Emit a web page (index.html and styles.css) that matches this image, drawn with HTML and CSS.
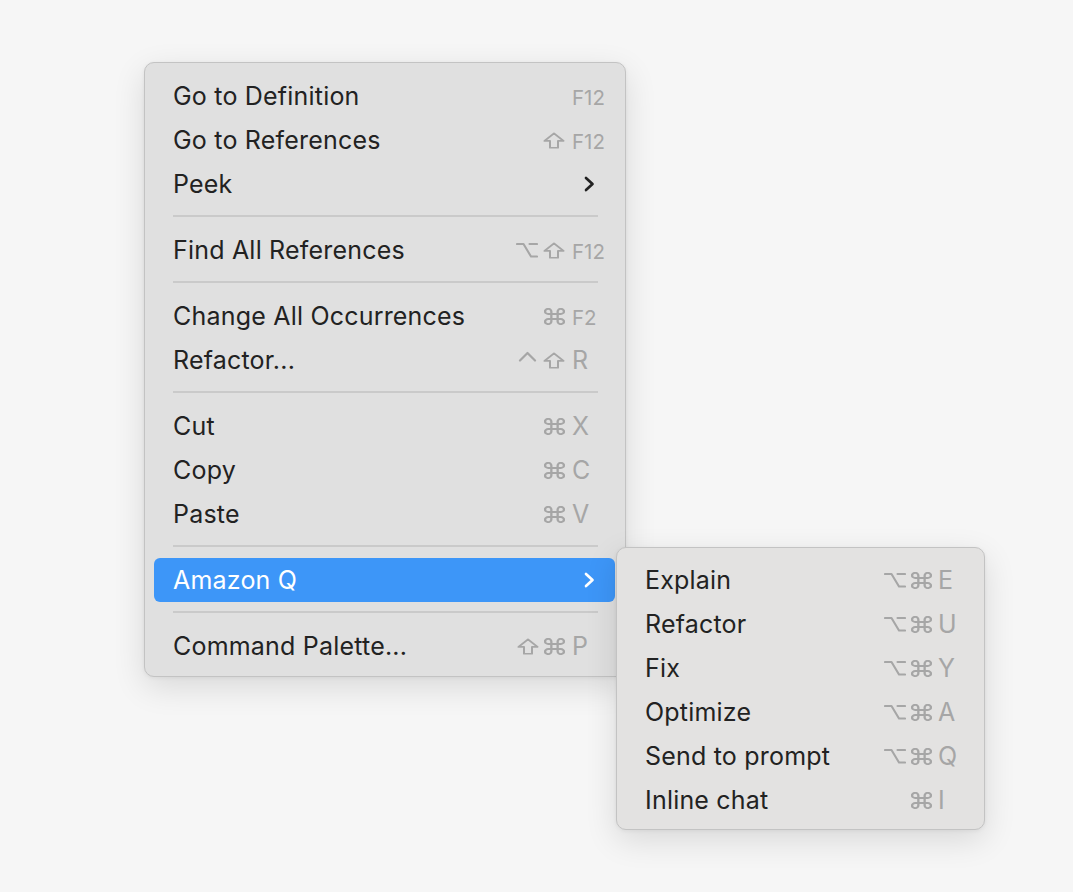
FILE: index.html
```html
<!DOCTYPE html>
<html lang="en">
<head>
<meta charset="utf-8">
<title>Context menu</title>
<link rel="stylesheet" href="styles.css">
</head>
<body>
<svg class="defs" width="0" height="0" aria-hidden="true">
  <defs>
    <symbol id="i-cmd" viewBox="2 2 20 20" preserveAspectRatio="none"><path d="M15 6v12a3 3 0 1 0 3-3H6a3 3 0 1 0 3 3V6a3 3 0 1 0-3 3h12a3 3 0 1 0-3-3"/></symbol>
    <symbol id="i-shift" viewBox="0 0 22 20" preserveAspectRatio="none"><path d="M11 1.5 L20.5 10.5 H15 V18.5 H7 V10.5 H1.5 Z"/></symbol>
    <symbol id="i-opt" viewBox="0 0 22 16" preserveAspectRatio="none"><path d="M1 2 H7.5 L15 14.5 H21 M13.5 2 H21"/></symbol>
    <symbol id="i-ctrl" viewBox="0 0 20 11"><path d="M2.5 9.5 L10 2 L17.5 9.5"/></symbol>
    <symbol id="i-chev" viewBox="0 0 12 16"><path d="M3 2 L9.5 8 L3 14"/></symbol>
  </defs>
</svg>

<div class="menu main">
  <div class="item"><span class="label">Go to Definition</span><span class="sc"><span class="key fkey">F12</span></span></div>
  <div class="item"><span class="label">Go to References</span><span class="sc"><svg class="ic shift"><use href="#i-shift"/></svg><span class="key fkey">F12</span></span></div>
  <div class="item"><span class="label">Peek</span><svg class="chev"><use href="#i-chev"/></svg></div>
  <div class="sep"></div>
  <div class="item"><span class="label">Find All References</span><span class="sc"><svg class="ic opt"><use href="#i-opt"/></svg><svg class="ic shift"><use href="#i-shift"/></svg><span class="key fkey">F12</span></span></div>
  <div class="sep"></div>
  <div class="item"><span class="label">Change All Occurrences</span><span class="sc"><svg class="ic cmd"><use href="#i-cmd"/></svg><span class="key fkey">F2</span></span></div>
  <div class="item"><span class="label">Refactor...</span><span class="sc"><svg class="ic ctrl"><use href="#i-ctrl"/></svg><svg class="ic shift"><use href="#i-shift"/></svg><span class="key">R</span></span></div>
  <div class="sep"></div>
  <div class="item"><span class="label">Cut</span><span class="sc"><svg class="ic cmd"><use href="#i-cmd"/></svg><span class="key">X</span></span></div>
  <div class="item"><span class="label">Copy</span><span class="sc"><svg class="ic cmd"><use href="#i-cmd"/></svg><span class="key">C</span></span></div>
  <div class="item"><span class="label">Paste</span><span class="sc"><svg class="ic cmd"><use href="#i-cmd"/></svg><span class="key">V</span></span></div>
  <div class="sep"></div>
  <div class="item active">
    <span class="label">Amazon Q</span><svg class="chev"><use href="#i-chev"/></svg>
    <div class="menu sub">
      <div class="item"><span class="label">Explain</span><span class="sc"><svg class="ic opt"><use href="#i-opt"/></svg><svg class="ic cmd"><use href="#i-cmd"/></svg><span class="key">E</span></span></div>
      <div class="item"><span class="label">Refactor</span><span class="sc"><svg class="ic opt"><use href="#i-opt"/></svg><svg class="ic cmd"><use href="#i-cmd"/></svg><span class="key">U</span></span></div>
      <div class="item"><span class="label">Fix</span><span class="sc"><svg class="ic opt"><use href="#i-opt"/></svg><svg class="ic cmd"><use href="#i-cmd"/></svg><span class="key">Y</span></span></div>
      <div class="item"><span class="label">Optimize</span><span class="sc"><svg class="ic opt"><use href="#i-opt"/></svg><svg class="ic cmd"><use href="#i-cmd"/></svg><span class="key">A</span></span></div>
      <div class="item"><span class="label">Send to prompt</span><span class="sc"><svg class="ic opt"><use href="#i-opt"/></svg><svg class="ic cmd"><use href="#i-cmd"/></svg><span class="key">Q</span></span></div>
      <div class="item"><span class="label">Inline chat</span><span class="sc"><svg class="ic cmd"><use href="#i-cmd"/></svg><span class="key">I</span></span></div>
    </div>
  </div>
  <div class="sep"></div>
  <div class="item"><span class="label">Command Palette...</span><span class="sc"><svg class="ic shift"><use href="#i-shift"/></svg><svg class="ic cmd"><use href="#i-cmd"/></svg><span class="key">P</span></span></div>
</div>
</body>
</html>
```

FILE: styles.css
```css
* { box-sizing: border-box; }

html, body {
  margin: 0;
  background: #f6f6f6;
}

body {
  min-height: 892px;
  padding: 62px 0 0 144px;
  font-family: Inter, "Noto Sans", "Liberation Sans", sans-serif;
  color: #222222;
  -webkit-font-smoothing: antialiased;
}

.defs { position: absolute; width: 0; height: 0; overflow: hidden; }

.menu {
  background: #e0e0e0;
  border: 1px solid #c3c3c3;
  border-radius: 10px;
  box-shadow: 0 10px 32px rgba(0, 0, 0, 0.12), 0 1px 4px rgba(0, 0, 0, 0.06);
}

.main {
  width: 482px;
  padding: 11px 10px 8px 9px;
  --keyw: 34px;
  --keygap: 7px;
}

.sub {
  position: absolute;
  left: calc(100% + 1px);
  top: -11px;
  width: 369px;
  padding: 10px 10px 7px 9px;
  background: #e3e2e1;
  color: #222222;
  --keyw: 27px;
  --keygap: 6px;
}

.item {
  position: relative;
  display: flex;
  align-items: center;
  height: 44px;
  padding: 0 9px 0 19px;
  border-radius: 6px;
  font-size: 25px;
  letter-spacing: 0.2px;
  white-space: nowrap;
}

.item.active {
  background: #3d96f8;
  color: #ffffff;
}

.label { flex: none; }

.sc {
  margin-left: auto;
  display: flex;
  align-items: center;
  color: #a6a6a6;
}

.ic {
  fill: none;
  stroke: #a6a6a6;
  stroke-width: 2;
  stroke-linejoin: round;
  stroke-linecap: round;
  margin-left: 5px;
  flex: none;
  overflow: visible;
}

.ic.cmd { width: 21px; height: 17px; stroke-width: 2.2; }
.ic.shift { width: 22px; height: 17px; stroke-width: 2; }
.ic.opt { width: 22px; height: 16px; stroke-width: 2.1; }
.ic.ctrl { width: 21px; height: 11px; margin-top: -7px; stroke-width: 2.2; }

.key {
  width: var(--keyw);
  margin-left: var(--keygap);
  font-size: 25px;
  letter-spacing: 0;
  color: #a6a6a6;
}

.key.fkey {
  font-size: 20.5px;
  padding-top: 2px;
}

.chev {
  margin-left: auto;
  margin-right: 11px;
  width: 12px;
  height: 16px;
  fill: none;
  stroke: #222222;
  stroke-width: 2.7;
  stroke-linecap: round;
  stroke-linejoin: round;
}

.item.active .chev { stroke: #ffffff; }

.sep {
  height: 22px;
  padding: 9px 17px 11px 19px;
}

.sep::before {
  content: "";
  display: block;
  height: 2px;
  background: #cacaca;
}
```
